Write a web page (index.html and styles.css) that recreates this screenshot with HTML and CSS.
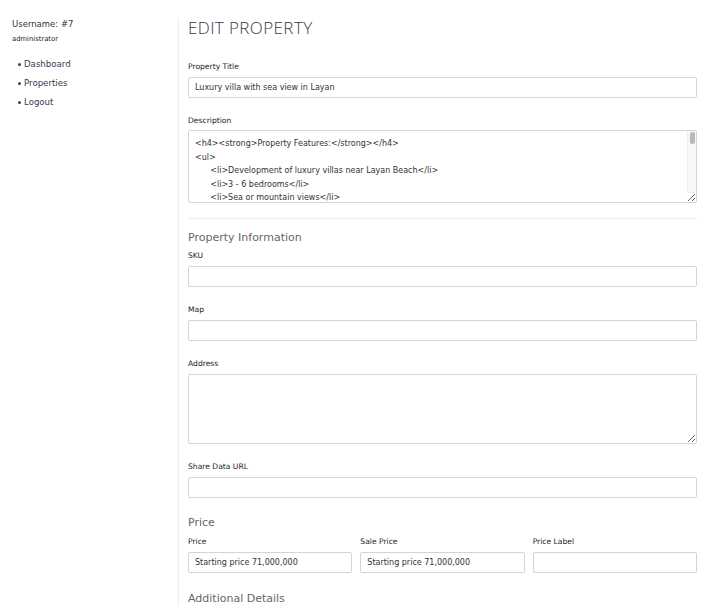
FILE: index.html
```html
<!DOCTYPE html>
<html>
<head>
<meta charset="utf-8">
<link rel="stylesheet" href="styles.css">
</head>
<body>
<div class="layout">
  <aside class="sidebar">
    <div class="username">Username: #7</div>
    <div class="role">administrator</div>
    <ul class="nav">
      <li><a href="#">Dashboard</a></li>
      <li><a href="#">Properties</a></li>
      <li><a href="#">Logout</a></li>
    </ul>
  </aside>
  <main class="main">
    <h1 class="page-title">EDIT PROPERTY</h1>
    <div class="group">
      <label class="label">Property Title</label>
      <input class="input" type="text" value="Luxury villa with sea view in Layan">
    </div>
    <div class="group">
      <label class="label">Description</label>
      <div class="scrollwrap">
        <textarea class="input textarea desc">&lt;h4&gt;&lt;strong&gt;Property Features:&lt;/strong&gt;&lt;/h4&gt;
&lt;ul&gt;
      &lt;li&gt;Development of luxury villas near Layan Beach&lt;/li&gt;
      &lt;li&gt;3 - 6 bedrooms&lt;/li&gt;
      &lt;li&gt;Sea or mountain views&lt;/li&gt;
      &lt;li&gt;Private pool&lt;/li&gt;
      &lt;li&gt;Fully furnished&lt;/li&gt;
&lt;/ul&gt;</textarea>
        <div class="fake-scrollbar"><div class="fake-thumb"></div></div>
      </div>
    </div>
    <hr class="divider">
    <h2 class="section">Property Information</h2>
    <div class="group">
      <label class="label">SKU</label>
      <input class="input" type="text">
    </div>
    <div class="group">
      <label class="label">Map</label>
      <input class="input" type="text">
    </div>
    <div class="group">
      <label class="label">Address</label>
      <textarea class="input textarea addr"></textarea>
    </div>
    <div class="group">
      <label class="label">Share Data URL</label>
      <input class="input" type="text">
    </div>
    <h2 class="section section-price">Price</h2>
    <div class="row">
      <div class="group">
        <label class="label">Price</label>
        <input class="input" type="text" value="Starting price 71,000,000">
      </div>
      <div class="group">
        <label class="label">Sale Price</label>
        <input class="input" type="text" value="Starting price 71,000,000">
      </div>
      <div class="group">
        <label class="label">Price Label</label>
        <input class="input" type="text">
      </div>
    </div>
    <h2 class="section">Additional Details</h2>
  </main>
</div>
</body>
</html>
```
FILE: styles.css
```css
html, body {
  margin: 0;
  padding: 0;
  background: #fff;
}
body {
  font-family: "DejaVu Sans", "Open Sans", sans-serif;
  color: #333;
  overflow: hidden;
}
.layout {
  display: flex;
  align-items: stretch;
  min-height: 606px;
}
.sidebar {
  width: 166px;
  padding: 18px 0 0 12px;
  flex-shrink: 0;
}
.username {
  font-size: 8.5px;
  line-height: 12px;
  color: #333;
}
.role {
  font-size: 6.8px;
  line-height: 10px;
  margin-top: 4px;
  color: #222;
}
.nav {
  list-style: none;
  margin: 11px 0 0 0;
  padding: 0 0 0 7px;
}
.nav li {
  font-size: 8.6px;
  line-height: 19px;
  position: relative;
  padding-left: 5px;
}
.nav li::before {
  content: "";
  position: absolute;
  left: -1px;
  top: 8px;
  width: 3px;
  height: 3px;
  border-radius: 50%;
  background: #444;
}
.nav a {
  color: #2f3d52;
  text-decoration: none;
}
.main {
  flex: 1;
  margin-top: 18px;
  border-left: 1px solid #ececec;
  padding: 0 17px 0 9px;
}
.page-title {
  font-family: "Open Sans", "DejaVu Sans", sans-serif;
  font-size: 17px;
  font-weight: 300;
  line-height: 20px;
  margin: 0 0 23px 0;
  color: #3a3a3a;
  letter-spacing: 0.4px;
}
.group {
  display: flex;
  flex-direction: column;
  margin-bottom: 17px;
}
.label {
  font-size: 7.6px;
  font-weight: 500;
  line-height: 12px;
  margin-bottom: 4px;
  color: #222;
}
.input {
  box-sizing: border-box;
  height: 21px;
  border: 1px solid #d4d4d4;
  border-radius: 2px;
  padding: 0 6px;
  font-family: inherit;
  font-size: 8px;
  color: #333;
  background: #fff;
  margin: 0;
  width: 100%;
}
.textarea {
  resize: vertical;
  padding: 6px 6px;
  line-height: 13.5px;
  display: block;
}
.scrollwrap {
  position: relative;
  margin-top: -1px;
}
.desc {
  height: 73px;
  overflow: hidden;
  padding-right: 14px;
}
.fake-scrollbar {
  position: absolute;
  right: 1px;
  top: 1px;
  width: 8px;
  height: 61px;
  background: #f7f7f7;
  border-left: 1px solid #ececec;
  border-bottom: 1px solid #ececec;
}
.fake-thumb {
  margin: 1px 0 0 2px;
  width: 5px;
  height: 12px;
  border-radius: 3px;
  background: #b9b9b9;
}
.addr {
  height: 70px;
}
.divider {
  border: 0;
  border-top: 1px solid #eee;
  margin: -2px 0 11px 0;
}
.section {
  font-size: 11px;
  font-weight: 400;
  line-height: 16px;
  color: #666;
  margin: 0 0 4px 0;
}
.section-price {
  margin: 1px 0 5px 0;
}
.row {
  display: grid;
  grid-template-columns: 1fr 1fr 1fr;
  column-gap: 8px;
}
.row .group {
  margin-bottom: 18px;
}
```
